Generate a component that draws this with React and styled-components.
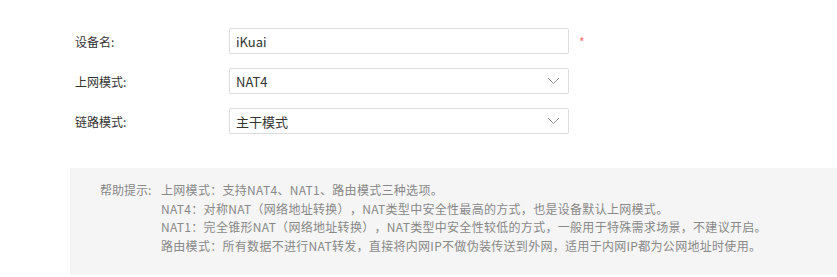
import React from 'react';
import styled, { createGlobalStyle } from 'styled-components';

const Global = createGlobalStyle`
  body {
    margin: 0;
    background: #fff;
    font-family: "Noto Sans CJK SC", "Noto Sans", sans-serif;
    font-size: 12px;
    color: #333;
    text-spacing-trim: space-all;
  }
`;

const Page = styled.div`
  padding-top: 28px;
`;

const Form = styled.div`
  padding-left: 75px;
  display: flex;
  flex-direction: column;
  gap: 14px;
`;

const Row = styled.div`
  display: flex;
  align-items: center;
  height: 26px;
`;

const Label = styled.span`
  width: 154px;
  color: #333;
`;

const Field = styled.div`
  width: 340px;
  height: 26px;
  box-sizing: border-box;
  border: 1px solid #dcdcdc;
  border-radius: 2px;
  display: flex;
  align-items: center;
  justify-content: space-between;
  padding: 0 8px 0 6px;
  color: #333;
  font-size: 13px;
`;

const Required = styled.span`
  color: #f36c6c;
  margin-left: 10px;
  font-size: 12px;
`;

const Chevron = () => (
  <svg width="13" height="8" viewBox="0 0 13 8">
    <path d="M1 1l5.5 5.5L12 1" fill="none" stroke="#999" strokeWidth="1" />
  </svg>
);

const Help = styled.div`
  margin: 34px 0 0 70px;
  background: #f5f5f5;
  padding: 13px 0 20px 30px;
  display: flex;
  color: #888;
  line-height: 18.6px;
`;

const HelpTitle = styled.span`
  width: 61px;
  flex-shrink: 0;
`;

const HelpLines = styled.div`
  display: flex;
  flex-direction: column;
  letter-spacing: 0.3px;
`;

const fields = [
  { label: '设备名:', value: 'iKuai', required: true },
  { label: '上网模式:', value: 'NAT4', select: true },
  { label: '链路模式:', value: '主干模式', select: true },
];

const tips = [
  '上网模式：支持NAT4、NAT1、路由模式三种选项。',
  'NAT4：对称NAT（网络地址转换），NAT类型中安全性最高的方式，也是设备默认上网模式。',
  'NAT1：完全锥形NAT（网络地址转换），NAT类型中安全性较低的方式，一般用于特殊需求场景，不建议开启。',
  '路由模式：所有数据不进行NAT转发，直接将内网IP不做伪装传送到外网，适用于内网IP都为公网地址时使用。',
];

export default function App() {
  return (
    <Page>
      <Global />
      <Form>
        {fields.map((f) => (
          <Row key={f.label}>
            <Label>{f.label}</Label>
            <Field>
              <span>{f.value}</span>
              {f.select && <Chevron />}
            </Field>
            {f.required && <Required>*</Required>}
          </Row>
        ))}
      </Form>
      <Help>
        <HelpTitle>帮助提示:</HelpTitle>
        <HelpLines>
          {tips.map((t) => (
            <span key={t}>{t}</span>
          ))}
        </HelpLines>
      </Help>
    </Page>
  );
}
